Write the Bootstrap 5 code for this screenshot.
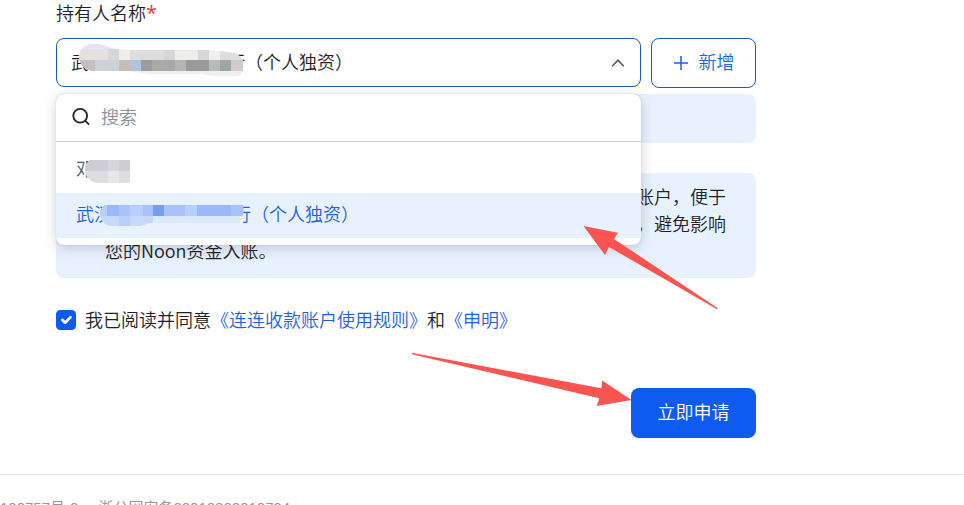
<!DOCTYPE html>
<html lang="zh-CN">
<head>
<meta charset="utf-8">
<meta name="viewport" content="width=device-width, initial-scale=1">
<title>账户申请</title>
<link href="https://cdn.jsdelivr.net/npm/bootstrap@5.3.0/dist/css/bootstrap.min.css" rel="stylesheet">
<style>
:root { --brand: #0f5bf0; --tint: #e8f2ff; --ink-weight: 350; }
body { font-family: "Noto Sans CJK SC", sans-serif; font-size: 18px; line-height: 27px; font-weight: var(--ink-weight); color: #1d2129; background: #fff; }
a { color: #1d5fe0; text-decoration: none; }
.apply-form { max-width: 756px; padding-left: 56px; }
.holder-label { line-height: 24px; padding-bottom: 14px; }
.holder-label b { color: #e5393f; font: 20px/20px "Open Sans", sans-serif; }
.holder-row { gap: 10px; }
.holder-select { height: 49px; padding: 0 14px 2px; border: 1px solid #1d56c8; border-radius: 8px; background: #fff; color: #1d2129; font-weight: var(--ink-weight); appearance: none; font-size: 18px; }
.chevron { right: 16px; top: 19px; }
.cover-field { left: 22px; top: 6px; }
.add-btn { height: 50px; width: 105px; gap: 10px; border: 1px solid #1d56c8; border-radius: 8px; color: #1d5fe0; font-size: 18px; font-weight: var(--ink-weight); }
.add-btn span, .submit-btn { padding-bottom: 4px; }
.menu-panel { top: 56px; left: 0; right: 0; z-index: 5; background: #fff; border-radius: 8px; padding-bottom: 7px; box-shadow: 0 3px 14px rgba(0,0,0,.18), 0 0 1px rgba(0,0,0,.25); }
.search-line { height: 48px; padding: 0 16px; gap: 10px; border-bottom: 1px solid #c9cdd2; }
.search-line input { padding: 0 0 3px; font-size: 18px; font-weight: var(--ink-weight); outline: 0; }
.search-line input::placeholder { color: #86909c; opacity: 1; }
.menu-option { height: 45px; padding: 0 20px; border: 0; background: transparent; color: #4e5561; font-weight: var(--ink-weight); line-height: 41px; }
.menu-option.first { margin-top: 6px; }
.menu-option.chosen { background: var(--tint); color: #1d5fe0; }
.masked { width: 121px; }
.cover-first { left: 28px; top: 11px; }
.cover-chosen { left: 43px; top: 10px; }
.note { background: var(--tint); border-radius: 8px; }
.note-short { height: 49px; margin-top: 6px; margin-bottom: 30px; }
.note-long { padding: 10px 30px 14px 49px; }
.consent { margin-top: 28px; gap: 9px; }
.consent .form-check-input { width: 20px; height: 20px; border-radius: 4px; }
.consent .form-check-input:checked { background-color: var(--brand); border-color: var(--brand); }
.submit-btn { margin-top: 55px; width: 125px; height: 50px; border-radius: 8px; background: var(--brand); color: #fff; font-size: 18px; font-weight: var(--ink-weight); }
.page-foot { margin-top: 36px; padding-top: 21px; border-top: 1px solid #e3e5e8; font: 15px/24px "Liberation Sans", "Noto Sans CJK SC", sans-serif; color: #9298a1; gap: 20px; }
.arrows { left: 0; top: 0; z-index: 9; pointer-events: none; }
</style>
<script src="https://cdn.jsdelivr.net/npm/bootstrap@5.3.0/dist/js/bootstrap.bundle.min.js"></script>
</head>
<body class="position-relative vh-100 overflow-hidden">
<main class="apply-form">
  <label class="holder-label d-block" for="holder">持有人名称<b>*</b></label>
  <div class="holder-row d-flex">
    <div class="position-relative flex-grow-1">
      <select id="holder" class="holder-select w-100 d-block">
        <option>武汉　　　　　　&nbsp;&nbsp;&nbsp;行（个人独资）</option>
      </select>
      <svg class="chevron position-absolute" width="14" height="12" viewBox="0 0 14 12" fill="none" stroke="#4e5561" stroke-width="1.5" aria-hidden="true"><path d="M1.2 9.2 7 3.2l5.8 6"/></svg>
      <svg class="cover-field position-absolute" width="166" height="32" viewBox="0 0 166 32" aria-hidden="true">
        <defs><clipPath id="blobA"><path d="M1 11Q3 1 13 0q10-1 20 4 9 2 19 2h68q20 0 36 3 9 3 9 10v8q-1 5-8 5h-20l-14-2H70L50 27H17Q8 27 5 22Q0 17 1 11Z"/></clipPath></defs>
        <g clip-path="url(#blobA)">
          <path fill="#efefef" d="M0 0h166v32H0z"/><path fill="#e2e5fa" d="M0 0h37v5H9L0 9z"/>
          <path fill="#e4e1e1" d="M0 5h30v11H0z"/><path fill="#d4d6d9" d="M30 5h11v11H30zM86 5h11v11H86zM120 5h11v11h-11z"/><path fill="#efeeec" d="M41 5h11v11H41zM97 5h23v11H97z"/><path fill="#dfdddc" d="M52 5h34v11H52zM142 5h24v11h-24z"/>
          <path fill="#c3bfbe" d="M0 16h17v16H0z"/><path fill="#cdd1d8" d="M17 16h24v16H17z"/><path fill="#c4bdba" d="M41 16h12v11H41z"/><path fill="#afc4df" d="M53 16h10v11H53z"/><path fill="#999da1" d="M63 16h11v11H63z"/><path fill="#aaa9aa" d="M74 16h23v11H74z"/><path fill="#b4b6b5" d="M97 16h11v11H97z"/><path fill="#9c9b9c" d="M108 16h23v11h-23z"/><path fill="#b8bbbb" d="M131 16h11v11h-11z"/><path fill="#a0a5a1" d="M142 16h11v11h-11z"/><path fill="#d2c9ca" d="M153 16h13v11h-13z"/>
        </g>
      </svg>
      <div class="menu-panel position-absolute">
        <div class="search-line d-flex align-items-center">
          <svg class="flex-shrink-0" width="19" height="19" viewBox="0 0 19 19" fill="none" stroke="#20242b" stroke-width="1.8" aria-hidden="true"><circle cx="8.2" cy="7.8" r="6.9"/><path d="m13.1 12.7 4 3.9"/></svg>
          <input class="border-0 w-100 bg-transparent" type="search" placeholder="搜索" aria-label="搜索">
        </div>
        <div role="listbox" aria-label="持有人名称">
          <button type="button" role="option" class="menu-option first position-relative d-flex w-100 text-start"><span>邓</span>
            <svg class="cover-first position-absolute" width="47" height="24" viewBox="0 0 47 24" aria-hidden="true"><clipPath id="blobB"><path d="M6 1h40v23H12Q6 22 2 16Q-1 6 6 1Z"/></clipPath><g clip-path="url(#blobB)"><path fill="#dddde0" d="M0 0h47v24H0z"/><path fill="#cdced3" d="M0 0h24v12H0zM35 0h12v12H35z"/><path fill="#d5d6d9" d="M24 0h11v12H24z"/><path fill="#e7e7e9" d="M24 12h11v12H24z"/></g></svg>
          </button>
          <button type="button" role="option" aria-selected="true" class="menu-option chosen position-relative d-flex w-100 text-start"><span>武汉</span><span class="masked"></span><span>行（个人独资）</span>
            <svg class="cover-chosen position-absolute" width="146" height="26" viewBox="0 0 146 26" aria-hidden="true"><clipPath id="blobC"><path d="M6 2h138q3 9-5 18H50l-8 3H10Q2 20 1 12Q1 5 6 2Z"/></clipPath><g clip-path="url(#blobC)"><path fill="#a9c2fa" d="M0 0h146v13H0z"/><path fill="#c6d9fc" d="M0 13h146v13H0z"/><path fill="#b6cffc" d="M0 0h8v13H0zM31 0h13v13H31zM86 0h12v13H86z"/><path fill="#9bb9f8" d="M8 0h12v13H8zM98 0h34v13H98z"/><path fill="#759df4" d="M54 0h11v13H54z"/><path fill="#dce8fd" d="M54 13h92v13H54z"/><path fill="#b9d0fb" d="M20 13h11v13H20z"/></g></svg>
          </button>
        </div>
      </div>
    </div>
    <button type="button" class="add-btn btn p-0 d-flex align-items-center justify-content-center">
      <svg width="16" height="16" viewBox="0 0 16 16" stroke="currentColor" stroke-width="1.5" aria-hidden="true"><path d="M8 1v14M1 8h14"/></svg><span>新增</span>
    </button>
  </div>
  <div class="note note-short"></div>
  <div class="note note-long">
    <div class="text-end">账户，便于</div>
    <div class="text-end">，避免影响</div>
    <div>您的Noon资金入账。</div>
  </div>
  <div class="consent d-flex align-items-center">
    <input class="form-check-input m-0 flex-shrink-0" type="checkbox" id="agree" checked>
    <div><label for="agree">我已阅读并同意</label><a href="#">《连连收款账户使用规则》</a>和<a href="#">《申明》</a></div>
  </div>
  <div class="d-flex justify-content-end">
    <button type="submit" class="submit-btn btn px-0 pt-0">立即申请</button>
  </div>
</main>
<footer class="page-foot d-flex"><span>100757号-2</span><span>浙公网安备33010802010794</span></footer>
<svg class="arrows position-absolute" width="760" height="440" viewBox="0 0 760 440" fill="#fa5452" aria-hidden="true">
  <path d="M583.5 226 618 232.7 614 239 718 308.3 717 309.3 609 247 605 255Z"/>
  <path d="M412 352.8 601.3 388.3 602.3 380.5 631.5 400 596.7 406 599.3 398.2 412 354.2Z"/>
</svg>
</body>
</html>
